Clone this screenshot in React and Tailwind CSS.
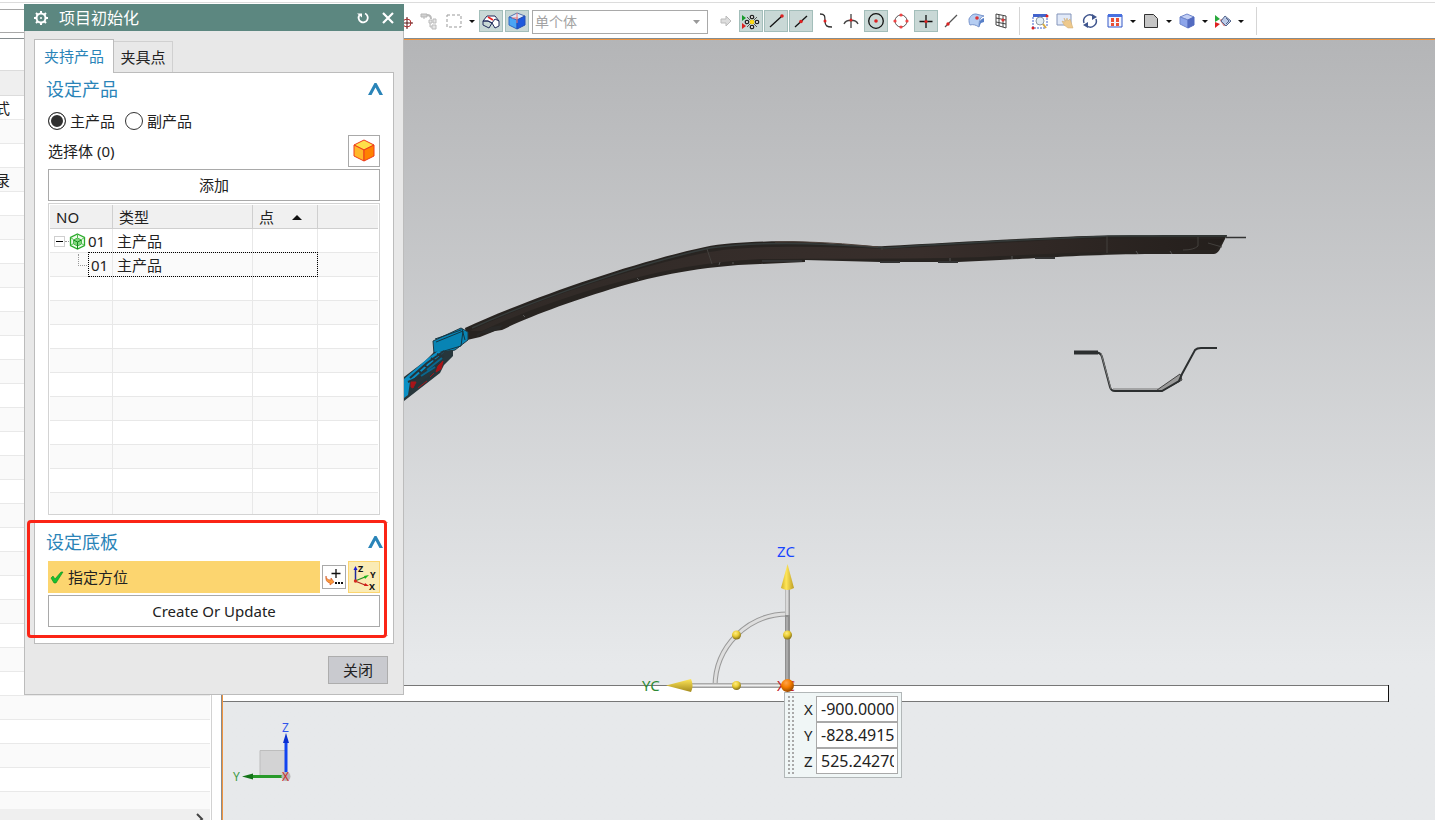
import React, { useState } from "react";

const treeRows = Array.from({ length: 12 }, (_, i) => i);
const sideRows = Array.from({ length: 30 }, (_, i) => {
  if (i === 0) return "式";
  if (i === 3) return "录";
  return "";
});

function ToolButton({ label, active, children }) {
  return (
    <button
      type="button"
      aria-label={label}
      className={
        active
          ? "flex h-[22px] w-6 shrink-0 items-center justify-center border border-[#a3beba] bg-[#c9d8d6]"
          : "flex h-[22px] w-6 shrink-0 items-center justify-center"
      }
    >
      <svg width="18" height="18" viewBox="0 0 18 18" fill="none" className="shrink-0">
        {children}
      </svg>
    </button>
  );
}

function Caret({ label }) {
  return (
    <button
      type="button"
      aria-label={label}
      className="flex h-[22px] w-[10px] shrink-0 items-center justify-center"
    >
      <svg width="6" height="3" viewBox="0 0 6 3">
        <path d="M0 0h6L3 3z" fill="#111" />
      </svg>
    </button>
  );
}

function Toolbar() {
  return (
    <header className="flex h-[39px] shrink-0 items-center border-b border-[#858c8e] bg-white pt-1 shadow-[inset_0_2px_0_#fff,inset_0_3px_0_#dcdcdc]">
      <div className="h-6 w-[392px] shrink-0 border-y border-[#a8a8a8]" />
      <div className="flex items-center gap-px">
        <ToolButton label="Point">
          <path d="M4 1l5 5-5 3z" fill="#223" />
          <circle cx="12" cy="11" r="4" stroke="#b33" />
          <path d="M12 5v12M6 11h12" stroke="#511" />
        </ToolButton>
        <ToolButton label="Assembly">
          <path d="M1 2h6v3H1zM4 5v2" stroke="#b5b5b5" fill="#d2d2d2" />
          <path d="M7 3c3 0 4 2 4 4" stroke="#bbb" strokeWidth="2" />
          <path d="M9 8h3v3H9zM13 7h3v4h-3zM12 13h4v4h-4zM10 11v4h2" stroke="#bbb" fill="#e5e5e5" />
        </ToolButton>
        <ToolButton label="Rectangle select">
          <path d="M2 3h14v12H2z" stroke="#999" strokeDasharray="3 2" />
        </ToolButton>
        <Caret label="Select options" />
      </div>
      <div className="ml-0.5 flex items-center gap-0.5">
        <ToolButton label="Highlight face" active>
          <path d="M1 9l4-5h8l4 5v5l-4 2-3-5-4-2z" fill="#fff" stroke="#222b5c" />
          <path d="M1 9v4l6 3 3-5 3-4 4 2M1 9l5 0M6 9l4 2" stroke="#222b5c" />
          <path d="M6 5l5 3" stroke="#e22" strokeWidth="1.6" />
        </ToolButton>
        <ToolButton label="Highlight body" active>
          <path d="M1 5l8-4 8 3-8 4z" fill="#dbe8fa" stroke="#5472ad" />
          <path d="M1 5l8 3v9l-8-4z" fill="#4aa5f5" stroke="#3368c4" />
          <path d="M9 8l8-4v9l-8 4z" fill="#1d59dd" stroke="#2450b5" />
          <path d="M9 1v10M4 6h6" stroke="#e77" />
        </ToolButton>
        <div className="relative ml-px">
          <select
            aria-label="Selection scope"
            disabled
            className="h-6 w-44 appearance-none border border-[#a9a9a9] bg-white pl-0.5 text-[14px] leading-[20px] text-[#a3a3a3] opacity-100"
          >
            <option>单个体</option>
          </select>
          <svg className="pointer-events-none absolute top-[11px] right-2" width="7" height="4" viewBox="0 0 7 4">
            <path d="M0 0h7L3.5 4z" fill="#999" />
          </svg>
        </div>
      </div>
      <div className="ml-1.5 flex items-center gap-px">
        <ToolButton label="Next">
          <path d="M4 7h5V4l5 5-5 5v-3H4z" fill="#ddd" stroke="#bbb" />
        </ToolButton>
        <ToolButton label="Snap point" active>
          <path d="M0 3l4 3-4 3z" fill="#189a2c" />
          <path d="M0 11l4 3-4 3z" fill="#d22" />
          <path d="M5 5l10 10M15 5L5 15" stroke="#555" />
          <g fill="#fff" stroke="#222" strokeWidth="1.300">
            <circle cx="10" cy="5" r="1.700" />
            <circle cx="10" cy="15" r="1.700" />
            <circle cx="5" cy="10" r="1.700" />
            <circle cx="15" cy="10" r="1.700" />
          </g>
          <circle cx="10" cy="10" r="2.300" fill="#ffdc16" />
        </ToolButton>
        <ToolButton label="End point" active>
          <path d="M3 15L15 4" stroke="#111" strokeWidth="1.300" />
          <circle cx="15" cy="4" r="1.800" fill="#d22" />
        </ToolButton>
        <ToolButton label="Mid point" active>
          <path d="M3 15L15 4" stroke="#111" strokeWidth="1.300" />
          <circle cx="9" cy="9.500" r="1.800" fill="#d22" />
        </ToolButton>
        <ToolButton label="Control point">
          <path d="M3 2c5 0 5 2 5 7s2 6 7 6" stroke="#333" strokeWidth="1.300" />
          <circle cx="8" cy="9" r="1.500" fill="#d22" />
        </ToolButton>
        <ToolButton label="Intersection">
          <path d="M9 2v14M2 12c2-5 12-5 14 0" stroke="#444" strokeWidth="1.300" />
          <circle cx="9" cy="8" r="1.500" fill="#d22" />
        </ToolButton>
        <ToolButton label="Arc center" active>
          <circle cx="9" cy="9" r="7.300" stroke="#111" strokeWidth="1.300" />
          <circle cx="9" cy="9" r="1.800" fill="#d22" />
        </ToolButton>
        <ToolButton label="Quadrant point">
          <circle cx="9" cy="9" r="6" stroke="#555" />
          <g fill="#e44">
            <circle cx="9" cy="3" r="1.600" />
            <circle cx="9" cy="15" r="1.600" />
            <circle cx="3" cy="9" r="1.600" />
            <circle cx="15" cy="9" r="1.600" />
          </g>
        </ToolButton>
        <ToolButton label="Existing point" active>
          <path d="M9 3v13M2.500 9.500h13" stroke="#111" strokeWidth="1.300" />
          <circle cx="9" cy="9.500" r="1.600" fill="#d22" />
        </ToolButton>
        <ToolButton label="Point on curve">
          <path d="M3 15L15 3" stroke="#555" strokeWidth="1.300" />
          <circle cx="6" cy="12" r="1.700" fill="#d22" />
        </ToolButton>
        <ToolButton label="Point on face">
          <path d="M2 7c2-4 4-5 7-5l8 2c-4 1-5 4-5 11-3-2-6-3-9-2-1-2-1-4-1-6z" fill="#b5cdf2" stroke="#7894cc" />
          <path d="M12 15c0-5 1-8 5-9v4l-3 1z" fill="#5880c8" />
          <circle cx="10" cy="6" r="1.800" fill="#d33" />
        </ToolButton>
        <ToolButton label="Grid point">
          <path d="M4 2l10 2v12L4 13zM4 6l10 2M4 10l10 2M7 3v11M11 4v11" stroke="#444" />
          <circle cx="11" cy="8" r="1.600" fill="#d33" />
        </ToolButton>
      </div>
      <div className="ml-[6px] h-7 w-px bg-[#d5d5d5]" />
      <div className="ml-2 flex items-center gap-px">
        <ToolButton label="Fit view">
          <path d="M2 2h14v3H2z" fill="#4263cc" />
          <path d="M2 5v11h12M16 6v8" stroke="#4263cc" strokeDasharray="2 1" />
          <circle cx="9" cy="9" r="4" fill="#e5eef4" stroke="#8c99a5" />
          <path d="M12 12l3 4" stroke="#d7ab43" strokeWidth="2" />
          <circle cx="2" cy="16" r="1.500" fill="#d22" />
          <circle cx="16" cy="4" r="1.500" fill="#d22" />
        </ToolButton>
        <ToolButton label="Pan">
          <path d="M1 2h14v11H1z" fill="#e1e9f8" stroke="#8495ba" />
          <path d="M6 9l3 1-1-4 2 3 1-3 1 3 2-2 1 3 2 6h-5l-4-3z" fill="#eec98c" stroke="#cfaa70" strokeWidth=".5" />
        </ToolButton>
        <ToolButton label="Rotate">
          <path d="M3 11a6 6 0 0 1 9-7M15 7a6 6 0 0 1-9 7" stroke="#40568e" strokeWidth="1.500" />
          <path d="M11 2l5 3-5 3zM7 16l-5-3 5-3z" fill="#40568e" />
        </ToolButton>
        <ToolButton label="Window layout">
          <path d="M2 3h14v12H2z" fill="#f2f5ff" stroke="#3558c7" />
          <path d="M2 2h14v3H2z" fill="#4870df" />
          <path d="M5 6h3v4H5zM10 6h3v4h-3zM5 11h3v3H5zM10 11h3v3h-3z" fill="#ea5035" />
        </ToolButton>
        <Caret label="Layout options" />
        <ToolButton label="Section view">
          <path d="M2.500 2.500h9l4 4v9h-13z" fill="#c6c6c6" stroke="#333" />
        </ToolButton>
        <Caret label="Section options" />
        <ToolButton label="Render style">
          <path d="M2 5l7-3 7 3-6 3z" fill="#c2cff5" stroke="#7187cc" />
          <path d="M2 5l8 3v8l-8-4z" fill="#8da5ea" stroke="#7187cc" />
          <path d="M10 8l6-3v8l-6 3z" fill="#536bc0" stroke="#536bc0" />
        </ToolButton>
        <Caret label="Render options" />
        <ToolButton label="Show and hide">
          <path d="M1 3l5 4-5 3z" fill="#28a83c" />
          <path d="M1 10l5 2-5 4z" fill="#d22" />
          <path d="M6 8l4 6 3-2-4-5z" fill="#e88" stroke="#b66" strokeWidth=".5" />
          <path d="M7 9l4-5 6 5-5 5z" fill="#bccbe8" stroke="#54658c" />
          <path d="M12 6l3 3-3 3" stroke="#54658c" />
        </ToolButton>
        <Caret label="Show options" />
      </div>
      <div className="ml-[10px] h-7 w-px bg-[#d5d5d5]" />
    </header>
  );
}

function SidePanel() {
  return (
    <aside className="flex w-[222px] shrink-0 flex-col border-r border-[#8a8a8a] bg-white pr-[9px]">
      <div className="flex flex-1 flex-col overflow-hidden border-r border-[#d2d2d2] pr-px">
        <div className="h-[31px] shrink-0" />
        <div className="h-[26px] shrink-0 border-y border-[#dcdcdc] bg-[#efefef]" />
        <ul className="min-h-0 flex-1 overflow-hidden">
          {sideRows.map((text, i) => (
            <li
              key={i}
              className="h-6 border-b border-[#e9e9e9] bg-white text-[15px] leading-[24px] even:bg-[#fafafa]"
            >
              <span className="flex w-[10px] justify-end overflow-hidden">{text}</span>
            </li>
          ))}
        </ul>
        <div className="flex h-[11px] shrink-0 justify-end overflow-hidden bg-[#efefef] pt-1 pr-1.5">
          <svg width="8" height="12" viewBox="0 0 8 12" fill="none">
            <path d="M1 1l5 5-5 5" stroke="#444" strokeWidth="2" />
          </svg>
        </div>
      </div>
    </aside>
  );
}

// Model geometry, drawn from the window origin
function Scene() {
  return (
    <svg className="absolute inset-0 h-full w-full font-['Noto_Sans','Noto_Sans_CJK_SC',sans-serif]" role="img" aria-label="Model view">
      <defs>
        <linearGradient id="beam" x1="0" y1="0" x2="1" y2="0">
          <stop offset="0" stopColor="#302a27" />
          <stop offset=".6" stopColor="#382e2b" />
          <stop offset="1" stopColor="#241f1c" />
        </linearGradient>
        <linearGradient id="tubeV" x1="0" y1="0" x2="1" y2="0">
          <stop offset="0" stopColor="#aaa" />
          <stop offset=".4" stopColor="#e9e9e9" />
          <stop offset="1" stopColor="#8b8b8b" />
        </linearGradient>
        <linearGradient id="tubeH" x1="0" y1="0" x2="0" y2="1">
          <stop offset="0" stopColor="#999" />
          <stop offset=".5" stopColor="#eee" />
          <stop offset="1" stopColor="#8b8b8b" />
        </linearGradient>
        <linearGradient id="coneV" x1="0" y1="0" x2="1" y2="0">
          <stop offset="0" stopColor="#cfae28" />
          <stop offset=".4" stopColor="#ffe658" />
          <stop offset="1" stopColor="#bd9d24" />
        </linearGradient>
        <linearGradient id="coneH" x1="0" y1="0" x2="0" y2="1">
          <stop offset="0" stopColor="#ffe658" />
          <stop offset="1" stopColor="#a58b1d" />
        </linearGradient>
        <radialGradient id="ballY" cx=".4" cy=".3" r=".7">
          <stop offset="0" stopColor="#ffed83" />
          <stop offset=".5" stopColor="#e9cb31" />
          <stop offset="1" stopColor="#83701a" />
        </radialGradient>
        <radialGradient id="ballO" cx=".4" cy=".3" r=".7">
          <stop offset="0" stopColor="#ffa44c" />
          <stop offset=".5" stopColor="#f57c00" />
          <stop offset="1" stopColor="#984900" />
        </radialGradient>
      </defs>
      <g transform="translate(-223 -40)">
        {/* base plate */}
        <path d="M200 685.500H1388.500V701.500H200z" fill="#fff" stroke="#777" />
        <path d="M1388.500 685v17" stroke="#111" />

        {/* beam */}
        <path d="M465 328C530 298 635 262 705 247C735 241 790 240 825 243C850 244 870 247 885 246C940 243 1010 239 1060 237C1100 235 1180 235 1227 235L1221 247Q1218 254 1214 254H1145C1080 255 1040 258 1000 260L958 262H880L805 260V262L760 264C700 266 655 276 618 287C575 300 530 316 502 330L495 331L480 337L467 340z" fill="#282421" />
        <path d="M470 331C535 300 640 265 710 252C745 245 820 246 885 249C950 246 1010 243 1065 239H1224L1216 250C1130 250 1065 253 1000 256C930 260 840 258 760 259C700 262 650 273 600 287C560 299 520 313 482 331z" fill="url(#beam)" />
        <path d="M472 328C535 300 640 263 710 248C760 241 825 243 885 248C950 243 1020 240 1108 236H1227" stroke="#353b3a" strokeWidth="1.500" fill="none" />
        <path d="M775 242C810 241 850 244 878 247" stroke="#4f413a" fill="none" />
        <path d="M707 249l5 15M1107 236v17M882 248v2M1198 237v9q-4 4-15 4M1208 243l14 4" stroke="#43403d" fill="none" />
        <path d="M720 262l-1 3M733 262v2M950 258v3M1012 256v3M1136 251l2 3M1170 251l2 3M637 278l2 2M523 315l2 2" stroke="#555" />
        <path d="M762 261h40M880 262h20M938 262h20M1035 258h20" stroke="#333" strokeWidth="2" />
        <path d="M477 337l5-4h6l12-4 3-4-12 2-14 7z" fill="#292827" />
        <path d="M1226 237.500h20" stroke="#333" strokeWidth="1.500" />

        {/* clamp */}
        <path d="M433 341L461 328L468 332V340L455 350L434 354z" fill="#0884b4" stroke="#203944" />
        <path d="M436 342l27-11-2 15-27 8M462 329l3 11M435 339l26-9" stroke="#143745" fill="none" />
        <path d="M400 380L425 361L434 352L453 350L453 356L444 365L440 373L404 401z" fill="#27363b" />
        <path d="M404 379L427 359L438 351L444 352L430 364L410 382L408 395L404 398z" fill="#0b8fc4" />
        <path d="M410 378l17-15 17-12M408 382l14-6 18-14M413 388l20-13M418 370l5 5M424 365l7 5M431 358l8 5M437 354l7 3" stroke="#25343a" strokeWidth="2" fill="none" />
        <path d="M421 376l14-9M427 370l15-12" stroke="#08688f" strokeWidth="2" />
        <path d="M411 382h5l-3 6-2-1zM438 366l5-5-2 8-5 3zM418 388l9-7M430 377l4-4" stroke="#a81418" fill="#a81418" />

        {/* hat section */}
        <path d="M1157 390L1180 374L1182 380L1162 391z" fill="#999" stroke="#444" />
        <path d="M1074 352.500H1097Q1101 353 1102 357L1110 387Q1111 391 1115 391H1162L1179 381L1182 374L1195 350Q1197 348 1201 348H1217" stroke="#2c2f30" strokeWidth="2" fill="none" />
        <path d="M1101 353l10 36M1113 389h45" stroke="#777" fill="none" />
        <path d="M1074 352.500h24" stroke="#2c2f30" strokeWidth="4" />

        {/* dynamic csys handles */}
        <path d="M715 687A73 73 0 0 1 788 614" stroke="#999" strokeWidth="5" fill="none" />
        <path d="M715 687A73 73 0 0 1 788 614" stroke="#dedede" strokeWidth="3" fill="none" />
        <rect x="785" y="589" width="5" height="26" fill="url(#tubeV)" />
        <rect x="785" y="615" width="5" height="66" fill="#8f8f8f" />
        <path d="M787 617v64" stroke="#aaa" strokeWidth="2" />
        <rect x="691" y="683" width="90" height="5" fill="url(#tubeH)" />
        <path d="M787.500 564L794 588Q787.500 592 781 588z" fill="url(#coneV)" />
        <path d="M666 685.500L691 679Q694 685.500 691 692z" fill="url(#coneH)" />
        <circle cx="736.500" cy="635" r="4.500" fill="url(#ballY)" />
        <circle cx="787.500" cy="635" r="4.500" fill="url(#ballY)" />
        <circle cx="736.500" cy="685.500" r="4.500" fill="url(#ballY)" />
        <text x="777" y="691" fontSize="15" fill="#c3202a">XC</text>
        <circle cx="787.500" cy="685.500" r="6.500" fill="url(#ballO)" />
        <text x="777" y="557" fontSize="15" fill="#1745ff">ZC</text>
        <text x="642" y="691" fontSize="15" fill="#2b8a34">YC</text>

        {/* view triad */}
        <path d="M260 750.500h26v26h-26z" fill="#d3d3d4" stroke="#bdbdbd" />
        <path d="M286 740v32" stroke="#1244f0" strokeWidth="3" />
        <path d="M286 733l3 10h-6z" fill="#0a2fd0" />
        <path d="M251 776.500h32" stroke="#289a2a" strokeWidth="3" />
        <path d="M242 776.500l11-3v6z" fill="#137318" />
        <circle cx="286" cy="776.500" r="4.500" fill="#b5b5b5" />
        <text x="282" y="781" fontSize="12" fill="#cf2a2a">X</text>
        <text x="282" y="732" fontSize="12" fill="#3154ec">Z</text>
        <text x="233" y="781" fontSize="12" fill="#3c9a45">Y</text>
      </g>
    </svg>
  );
}

function CoordinateInput() {
  const [point, setPoint] = useState({ X: "-900.0000", Y: "-828.4915", Z: "525.24270" });
  return (
    <div className="absolute top-[652px] left-[561px] flex border border-[#b2b7b8] bg-[#f0f6f6] py-[3px] pr-[3px] pl-0.5">
      <svg width="8" height="78" aria-hidden="true">
        <path d="M2 0v78M6 0v78" stroke="#a9a9a9" strokeWidth="2" strokeDasharray="2 2" />
      </svg>
      <div className="ml-[9px] flex flex-col">
        {Object.keys(point).map((axis) => (
          <label key={axis} className="flex h-[26px] items-center text-[15px] leading-[24px]">
            <span className="w-[12px]">{axis}</span>
            <input
              type="text"
              value={point[axis]}
              onChange={(e) => setPoint({ ...point, [axis]: e.target.value })}
              className="h-[26px] w-[82px] border border-[#a9a9a9] bg-white pr-[3px] pl-1 text-[16px] text-[#222] outline-none"
            />
          </label>
        ))}
      </div>
    </div>
  );
}

function SectionTitle({ children }) {
  return (
    <div className="flex h-8 items-center justify-between pr-[10px] pl-[11px]">
      <h2 className="text-[18px] leading-[32px] text-[#2a84b8]">{children}</h2>
      <button type="button" aria-label="Collapse">
        <svg width="15" height="12" viewBox="0 0 15 12">
          <path d="M0 12L6.500 0h2L15 12h-3.500L7.500 4.500 3.500 12z" fill="#2a84b8" />
        </svg>
      </button>
    </div>
  );
}

function ProductTable() {
  return (
    <div className="mt-0.5 h-[312px] overflow-hidden border border-[#d3d3d3] p-px">
      <table className="w-full table-fixed border-separate border-spacing-0 text-left">
        <colgroup>
          <col className="w-[63px]" />
          <col className="w-[140px]" />
          <col className="w-[65px]" />
          <col />
        </colgroup>
        <thead>
          <tr className="h-6 bg-[#f0f0f0]">
            <th className="border-r border-b border-[#cfcfcf] p-0 pt-px pl-1.5 leading-[22px] font-normal">NO</th>
            <th className="border-r border-b border-[#cfcfcf] p-0 pt-px pl-1.5 leading-[22px] font-normal">类型</th>
            <th className="border-r border-b border-[#cfcfcf] p-0 pt-px pl-1.5 leading-[22px] font-normal">
              <span className="flex items-center gap-[18px]">
                点
                <svg width="10" height="5" viewBox="0 0 10 5">
                  <path d="M0 5l5-5 5 5z" fill="#111" />
                </svg>
              </span>
            </th>
            <th className="border-b border-[#cfcfcf] p-0" aria-label="Empty" />
          </tr>
        </thead>
        <tbody>
          {treeRows.map((i) => (
            <tr key={i} className="h-6 even:bg-[#fafafa]">
              <td className="relative border-r border-b border-[#e8e8e8] p-0 pt-px leading-[22px]">
                {i === 0 && (
                  <span className="flex items-center pl-1">
                    <button
                      type="button"
                      aria-label="Collapse row"
                      className="flex size-[11px] items-center justify-center border border-[#cfcfcf]"
                    >
                      <span className="h-px w-[7px] bg-black" />
                    </button>
                    <span className="w-1 border-t border-dotted border-[#999]" />
                    <svg className="mr-0.5" width="17" height="17" viewBox="0 0 17 17" fill="none">
                      <path d="M8.500 1l7 3.500v8l-7 3.500-7-3.500v-8z" fill="#edfbe9" stroke="#2bab2b" strokeWidth="1.300" />
                      <path d="M8.500 5l4 2v4l-4 2-4-2V7z" fill="#7fd67b" stroke="#4db84d" />
                      <path d="M4.500 7l4 2 4-2M8.500 9v7" stroke="#158a1e" />
                      <path d="M1.500 4.500l3 2M15.500 4.500l-3 2M1.500 12.500l3-2M15.500 12.500l-3-2M8.500 1v4" stroke="#4db84d" />
                    </svg>
                    01
                  </span>
                )}
                {i === 1 && (
                  <>
                    <span className="flex pl-7">
                      <span className="mr-1 h-[12px] w-[9px] border-b border-l border-dotted border-[#999]" />
                      01
                    </span>
                    <span className="pointer-events-none absolute -top-px left-[38px] h-[25px] w-[230px] border border-dotted border-black" />
                  </>
                )}
              </td>
              <td className="border-r border-b border-[#e8e8e8] p-0 pt-px pl-1 leading-[22px]">{i < 2 && "主产品"}</td>
              <td className="border-r border-b border-[#e8e8e8] p-0" />
              <td className="border-b border-[#e8e8e8] p-0" />
            </tr>
          ))}
        </tbody>
      </table>
    </div>
  );
}

const radioClass =
  "size-[18px] shrink-0 appearance-none rounded-full border border-[#333] bg-white checked:bg-[#303030] checked:shadow-[inset_0_0_0_2px_#fff]";

function InitDialog() {
  const [kind, setKind] = useState("main");
  return (
    <section
      role="dialog"
      aria-label="项目初始化"
      className="absolute top-1 left-6 w-[380px] border border-t-0 border-[#bcbcbc] bg-[#e8e8e8] pb-[10px]"
    >
      <div className="-mx-px flex h-[27px] items-center bg-[#5c8780] pr-[10px] pl-[10px] text-white">
        <svg width="14" height="14" viewBox="0 0 14 14" fill="none">
          <circle cx="7" cy="7" r="4.500" stroke="#fff" strokeWidth="2" />
          <circle cx="7" cy="7" r="1" fill="#fff" />
          <path d="M7 0v2M7 12v2M0 7h2M12 7h2M2 2l1.500 1.500M10.500 10.500L12 12M12 2l-1.500 1.500M3.500 10.500L2 12" stroke="#fff" strokeWidth="2" />
        </svg>
        <h1 className="ml-[11px] flex-1 text-[16px] leading-[28px]">项目初始化</h1>
        <button type="button" aria-label="Reset" className="mr-3">
          <svg width="13" height="13" viewBox="0 0 13 13" fill="none">
            <path d="M8 2.500A4.600 4.600 0 1 1 2.500 4" stroke="#fff" strokeWidth="1.800" />
            <path d="M0 2.500h5v4z" fill="#fff" />
          </svg>
        </button>
        <button type="button" aria-label="Close">
          <svg width="12" height="12" viewBox="0 0 12 12">
            <path d="M1 1l10 10M11 1L1 11" stroke="#fff" strokeWidth="2.200" />
          </svg>
        </button>
      </div>

      <div className="px-[9px] pt-2">
        <div role="tablist" className="relative z-10 -mb-px flex items-end">
          <button
            role="tab"
            aria-selected="true"
            type="button"
            className="h-[34px] w-20 border border-b-0 border-[#bcbcbc] bg-white leading-[33px] text-[#2a84b8]"
          >
            夹持产品
          </button>
          <button
            role="tab"
            aria-selected="false"
            type="button"
            className="mb-px h-[31px] w-[59px] border border-b-0 border-l-0 border-[#d0d0d0] leading-[30px]"
          >
            夹具点
          </button>
        </div>

        <div className="border border-[#bcbcbc] bg-white pb-[7px]">
          <SectionTitle>设定产品</SectionTitle>
          <div className="px-[13px]">
            <div className="flex h-[30px] items-center gap-[10px] pt-px">
              <label className="flex items-center gap-1">
                <input type="radio" name="kind" checked={kind === "main"} onChange={() => setKind("main")} className={radioClass} />
                主产品
              </label>
              <label className="flex items-center gap-1">
                <input type="radio" name="kind" checked={kind === "sub"} onChange={() => setKind("sub")} className={radioClass} />
                副产品
              </label>
            </div>
            <div className="flex h-8 items-center justify-between">
              <span>选择体 (0)</span>
              <button
                type="button"
                aria-label="Select body"
                className="flex size-8 items-center justify-center border border-[#a9a9a9] bg-white"
              >
                <svg width="24" height="24" viewBox="0 0 24 24" strokeLinejoin="round">
                  <path d="M2 6l10-5 10 5-10 5z" fill="#ffe049" stroke="#ee3b1c" />
                  <path d="M2 6l10 5v11L2 17z" fill="#ffb72a" stroke="#ee3b1c" />
                  <path d="M22 6l-10 5v11l10-5z" fill="#ff8200" stroke="#ee3b1c" />
                </svg>
              </button>
            </div>
            <button type="button" className="mt-0.5 block h-8 w-full border border-[#a9a9a9] bg-white leading-[30px]">
              添加
            </button>
            <ProductTable />
          </div>

          <div className="mx-[5px] mt-[7px] h-px bg-[#c9c9c9]" />
          <div className="mt-[3px]">
            <SectionTitle>设定底板</SectionTitle>
          </div>
          <div className="px-[13px] pt-[3px]">
            <div className="flex items-center gap-0.5">
              <div className="flex h-8 flex-1 items-center gap-1 bg-[#fcd56f] pl-0.5">
                <svg width="14" height="13" viewBox="0 0 14 13">
                  <path d="M1 7l2-2 2 3L11 1h2L6 12H4z" fill="#18c12e" stroke="#108a20" strokeWidth=".6" />
                </svg>
                指定方位
              </div>
              <button
                type="button"
                aria-label="Point dialog"
                className="flex size-6 items-center justify-center border border-[#a9a9a9] bg-white"
              >
                <svg width="18" height="18" viewBox="0 0 18 18">
                  <path d="M11 1v9M6.500 5.500h9" stroke="#111" strokeWidth="1.300" />
                  <path d="M1 8q0 4 5 4v-2l3 4-4 3v-2q-5-1-4-7z" fill="#fb9a3a" stroke="#cc4d1d" strokeWidth=".6" />
                  <path d="M10 14h2v2h-2zM13 14h2v2h-2zM16 14h2v2h-2z" fill="#111" />
                </svg>
              </button>
              <button
                type="button"
                aria-label="CSYS"
                className="flex size-8 items-center justify-center border border-[#fcd56f] bg-[#faebb5]"
              >
                <svg width="28" height="28" viewBox="0 0 28 28" fontSize="9" fontWeight="bold" fill="#111">
                  <path d="M5.500 18V7" stroke="#202a9c" strokeWidth="1.500" />
                  <path d="M5.500 3l2 4h-4z" fill="#1a1ad0" />
                  <path d="M5 18l10-4" stroke="#268a26" strokeWidth="1.300" />
                  <path d="M19 12l-4 4-1-3z" fill="#18b818" />
                  <path d="M5 18l10 4" stroke="#b12a20" strokeWidth="1.300" />
                  <path d="M19 23l-5 0 1-3z" fill="#d51a1a" />
                  <circle cx="5.500" cy="18" r="1.700" fill="#d52a20" />
                  <text x="8" y="9">Z</text>
                  <text x="20" y="15">Y</text>
                  <text x="19" y="27">X</text>
                </svg>
              </button>
            </div>
            <button type="button" className="mt-0.5 block h-8 w-full border border-[#a9a9a9] bg-white leading-[30px]">
              Create Or Update
            </button>
          </div>
          <div className="mx-[5px] mt-2 h-px bg-[#c9c9c9]" />
        </div>
      </div>

      <div className="mt-3 flex justify-end pr-[15px]">
        <button type="button" className="h-7 w-[60px] border border-[#adadad] bg-[#c9cacf] leading-[26px]">
          关闭
        </button>
      </div>

      {/* highlight mark */}
      <div className="pointer-events-none absolute right-4 bottom-14 left-[2px] h-[118px] rounded-[4px] border-3 border-[#fb2416]" />
    </section>
  );
}

export default function App() {
  return (
    <div className="relative flex h-screen flex-col overflow-hidden bg-white font-['Noto_Sans','Noto_Sans_CJK_SC',sans-serif] text-[15px] leading-[24px] text-[#222]">
      <Toolbar />
      <div className="flex min-h-0 flex-1">
        <SidePanel />
        <main className="relative min-w-0 flex-1 overflow-hidden border-t border-l border-[#f0943e] bg-linear-to-b from-[#b4b5b7] to-[#e7e9eb] to-80%">
          <Scene />
          <CoordinateInput />
        </main>
      </div>
      <InitDialog />
    </div>
  );
}
